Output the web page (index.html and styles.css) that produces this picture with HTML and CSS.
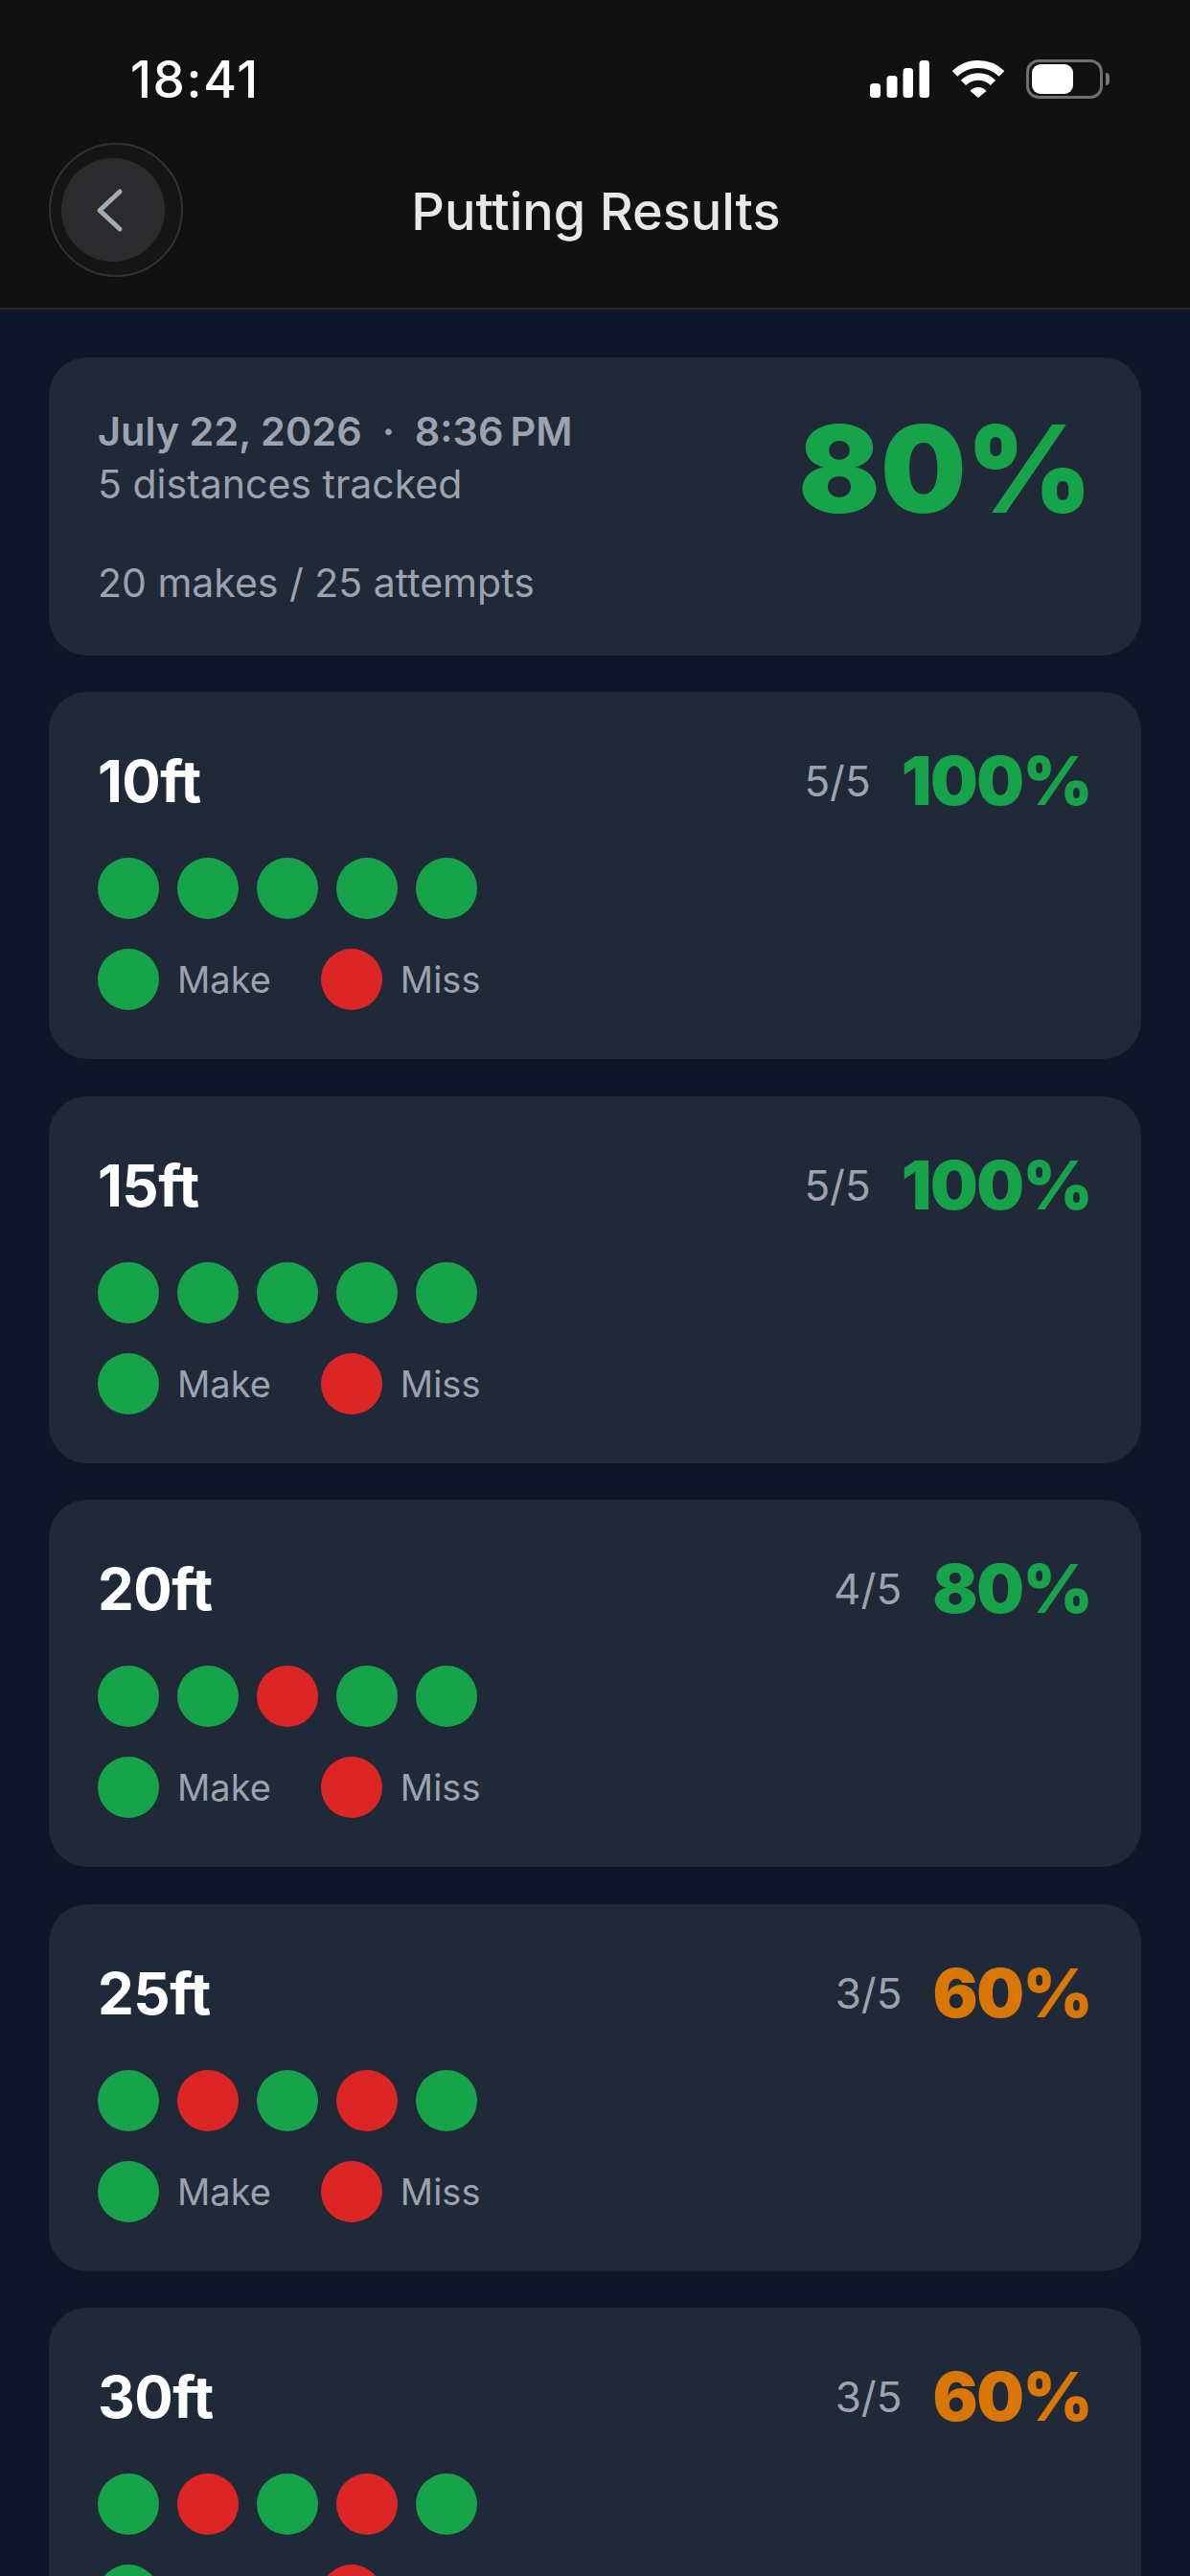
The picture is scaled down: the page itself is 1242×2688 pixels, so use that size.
FILE: index.html
```html
<!DOCTYPE html>
<html lang="en">
<head>
<meta charset="utf-8">
<title>Putting Results</title>
<link rel="stylesheet" href="styles.css">
</head>
<body>
<div class="app">
  <header class="top">
    <div class="status">
      <span class="time">18:41</span>
      <div class="status-icons">
        <svg class="signal" width="62" height="39" viewBox="0 0 62 39"><rect x="0" y="24" width="11" height="15" rx="3.500" fill="#fff"/><rect x="17.500" y="16" width="11" height="23" rx="3.500" fill="#fff"/><rect x="34.500" y="8" width="10.500" height="31" rx="3.500" fill="#fff"/><rect x="51.500" y="0" width="10.500" height="39" rx="3.500" fill="#fff"/></svg>
        <svg class="wifi" width="54" height="40" viewBox="0 0 54 40"><path d="M2.500 15A35 35 0 0 1 51.500 15" fill="none" stroke="#fff" stroke-width="8"/><path d="M11.500 24.400A22 22 0 0 1 42.500 24.400" fill="none" stroke="#fff" stroke-width="7.500"/><path d="M18.500 33A11 11 0 0 1 35.500 33L27 40Z" fill="#fff"/></svg>
        <div class="battery"><div class="battery-fill"></div></div>
      </div>
    </div>
    <div class="nav">
      <button class="back">
        <span class="back-inner">
          <svg width="29" height="47" viewBox="0 0 29 47"><path d="M25 4L4 23.500L25 43" fill="none" stroke="#a3aab8" stroke-width="5" stroke-linecap="round" stroke-linejoin="round"/></svg>
        </span>
      </button>
      <h1 class="title">Putting Results</h1>
    </div>
  </header>
  <main class="list">
    <section class="card summary">
      <div class="summary-text">
        <div class="date">July 22, 2026 &nbsp;·&nbsp; 8:36&#8201;PM</div>
        <div class="sub">5 distances tracked</div>
        <div class="sub totals">20 makes / 25 attempts</div>
      </div>
      <div class="big good">80%</div>
    </section>

    <section class="card">
      <div class="row-head"><span class="dist">10ft</span><div class="score"><span class="frac">5/5</span><span class="pct good">100%</span></div></div>
      <div class="dots"><i class="dot make"></i><i class="dot make"></i><i class="dot make"></i><i class="dot make"></i><i class="dot make"></i></div>
      <div class="legend"><span class="key"><i class="dot make"></i>Make</span><span class="key"><i class="dot miss"></i>Miss</span></div>
    </section>

    <section class="card">
      <div class="row-head"><span class="dist">15ft</span><div class="score"><span class="frac">5/5</span><span class="pct good">100%</span></div></div>
      <div class="dots"><i class="dot make"></i><i class="dot make"></i><i class="dot make"></i><i class="dot make"></i><i class="dot make"></i></div>
      <div class="legend"><span class="key"><i class="dot make"></i>Make</span><span class="key"><i class="dot miss"></i>Miss</span></div>
    </section>

    <section class="card">
      <div class="row-head"><span class="dist">20ft</span><div class="score"><span class="frac">4/5</span><span class="pct good">80%</span></div></div>
      <div class="dots"><i class="dot make"></i><i class="dot make"></i><i class="dot miss"></i><i class="dot make"></i><i class="dot make"></i></div>
      <div class="legend"><span class="key"><i class="dot make"></i>Make</span><span class="key"><i class="dot miss"></i>Miss</span></div>
    </section>

    <section class="card">
      <div class="row-head"><span class="dist">25ft</span><div class="score"><span class="frac">3/5</span><span class="pct warn">60%</span></div></div>
      <div class="dots"><i class="dot make"></i><i class="dot miss"></i><i class="dot make"></i><i class="dot miss"></i><i class="dot make"></i></div>
      <div class="legend"><span class="key"><i class="dot make"></i>Make</span><span class="key"><i class="dot miss"></i>Miss</span></div>
    </section>

    <section class="card">
      <div class="row-head"><span class="dist">30ft</span><div class="score"><span class="frac">3/5</span><span class="pct warn">60%</span></div></div>
      <div class="dots"><i class="dot make"></i><i class="dot miss"></i><i class="dot make"></i><i class="dot miss"></i><i class="dot make"></i></div>
      <div class="legend"><span class="key"><i class="dot make"></i>Make</span><span class="key"><i class="dot miss"></i>Miss</span></div>
    </section>
  </main>
</div>
</body>
</html>
```

FILE: styles.css
```css
* { box-sizing: border-box; margin: 0; padding: 0; }
html, body { height: 100%; }
body { background: #0e172a; font-family: Inter, "Liberation Sans", sans-serif; overflow: hidden; }
.app { height: 2688px; overflow: hidden; display: flex; flex-direction: column; }

.top { background: #111111; height: 323px; border-bottom: 2px solid #262a30; flex: none; }
.status { height: 149px; padding: 63px 84px 0 136px; display: flex; justify-content: space-between; align-items: flex-start; }
.time { color: #fff; font-size: 53px; font-weight: 500; line-height: 40px; letter-spacing: 1.6px; }
.status-icons { display: flex; align-items: flex-start; gap: 23.5px; padding-top: 0; margin-right: 7px; }
.wifi { margin-top: -1px; }
.battery { position: relative; width: 80px; height: 41px; border: 3px solid #707070; border-radius: 13px; padding: 2px 3px; margin-top: -1px; }
.battery::after { content: ""; position: absolute; right: -10px; top: 11px; width: 4px; height: 13px; background: #777; border-radius: 0 5px 5px 0; }
.battery-fill { width: 43px; height: 100%; background: #fff; border-radius: 9px; }

.nav { position: relative; height: 140px; display: flex; align-items: center; justify-content: center; padding: 3px 0 0 2px; }
.back { position: absolute; left: 51px; top: 0; width: 140px; height: 140px; border-radius: 50%; border: 2px solid #323234; background: #151515; display: flex; align-items: center; justify-content: center; }
.back-inner { width: 108px; height: 108px; border-radius: 50%; background: #2b2b2d; display: flex; align-items: center; justify-content: center; margin: 0 7px 0 0; padding-right: 6px; }
.title { color: #e8e8ea; font-size: 54px; font-weight: 500; line-height: 60px; }

.list { padding: 50px 51px 0; display: flex; flex-direction: column; gap: 38.5px; }
.card { background: #1f2937; border-radius: 40px; padding: 51px; }
.summary { height: 310.5px; padding: 0 51px; display: flex; justify-content: space-between; align-items: flex-start; flex: none; }
.summary-text { padding-top: 53px; }
.date { color: #9ca3af; font-size: 41.5px; font-weight: 600; line-height: 48px; margin-bottom: 6px; }
.sub { color: #9ca3af; font-size: 41px; font-weight: 400; line-height: 50px; }
.totals { margin-top: 53px; }
.big { font-size: 126px; font-weight: 900; line-height: 126px; margin-top: 53px; }
.good { color: #16a34a; }
.warn { color: #d97706; }

.row-head { display: flex; justify-content: space-between; align-items: center; height: 84px; margin-bottom: 38px; }
.dist { color: #fff; font-size: 60px; font-weight: 700; line-height: 70px; letter-spacing: -0.5px; }
.score { display: flex; align-items: center; gap: 32px; }
.frac { color: #9ca3af; font-size: 44px; line-height: 70px; }
.pct { font-size: 70px; font-weight: 900; line-height: 70px; letter-spacing: -1.5px; padding-right: 1px; }

.dots { display: flex; gap: 19px; margin-bottom: 31px; }
.dot { display: block; width: 64px; height: 64px; border-radius: 50%; flex: none; }
.make { background: #16a34a; }
.miss { background: #dc2626; }
.legend { display: flex; gap: 52px; }
.key { display: flex; align-items: center; gap: 19px; color: #9ca3af; font-size: 38px; line-height: 64px; }
```
